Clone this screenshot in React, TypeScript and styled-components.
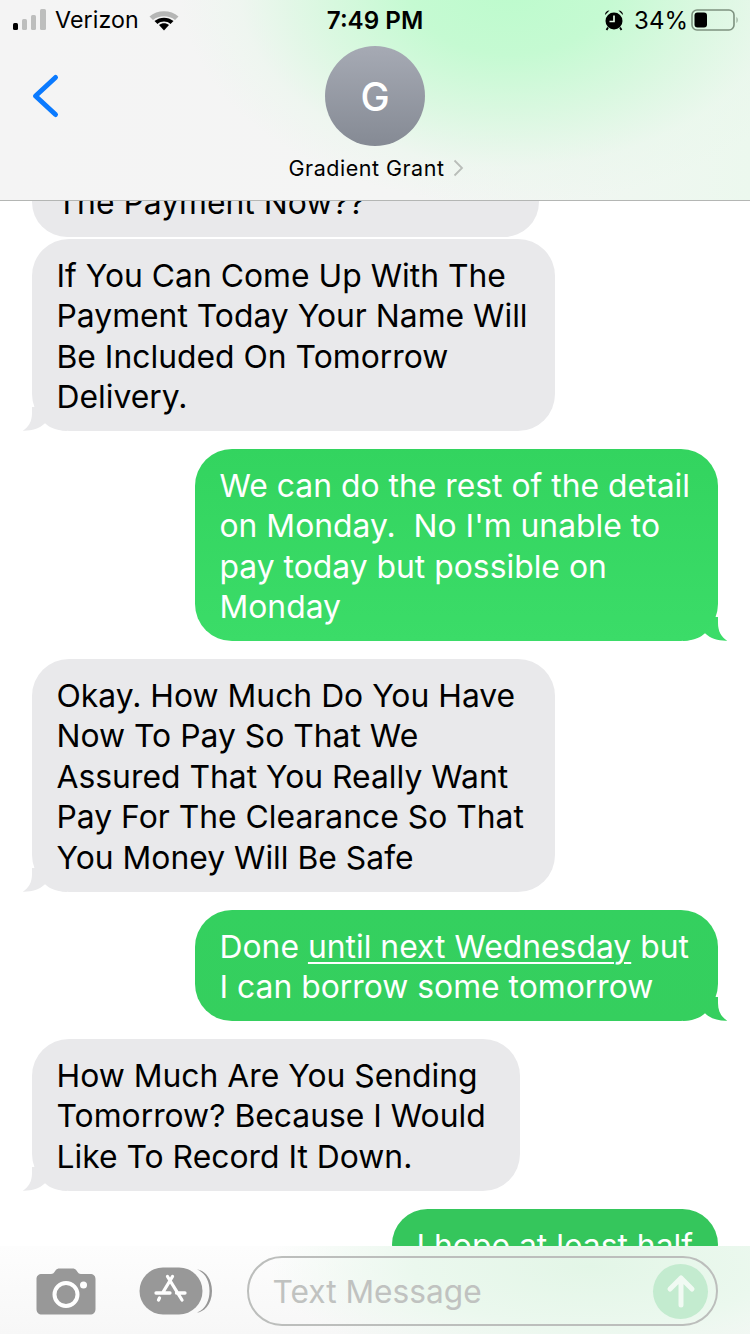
import React from 'react';
import styled, { createGlobalStyle } from 'styled-components';

const GlobalStyle = createGlobalStyle`
  html, body {
    margin: 0;
    padding: 0;
    background: #fff;
  }
`;

const Screen = styled.div`
  position: relative;
  display: flex;
  flex-direction: column;
  width: 750px;
  height: 1334px;
  overflow: hidden;
  background: #fff;
  font-family: Inter, "Liberation Sans", sans-serif;
  color: #000;
`;

const Header = styled.header`
  position: relative;
  z-index: 2;
  flex: 0 0 auto;
  height: 200px;
  border-bottom: 1px solid #b4b6b4;
  background:
    radial-gradient(ellipse 330px 215px at 510px -10px, #bdfbcd 0%, #c5fad2 30%, rgba(216, 248, 223, 0.9) 58%, rgba(232, 247, 235, 0.45) 82%, rgba(240, 246, 241, 0) 100%),
    linear-gradient(90deg, #f4f4f4 0%, #f4f5f4 55%, #ecf8ee 100%);
`;

const StatusBar = styled.div`
  display: grid;
  grid-template-columns: 1fr auto 1fr;
  align-items: center;
  height: 40px;
  padding: 0 13px;
`;

const StatusLeft = styled.div`
  display: flex;
  align-items: center;
  gap: 8px;
`;

const StatusRight = styled.div`
  display: flex;
  align-items: center;
  justify-content: flex-end;
  margin-right: -1.5px;
  gap: 10px;
`;

const Carrier = styled.span`
  font-size: 23.2px;
  letter-spacing: 0.1px;
`;

const Clock = styled.span`
  font-size: 24.2px;
  font-weight: 600;
`;

const Percent = styled.span`
  font-size: 24px;
  margin-right: -7.5px;
`;

const Contact = styled.div`
  position: relative;
  display: flex;
  flex-direction: column;
  align-items: center;
  padding-top: 6px;
`;

const BackIcon = styled.svg`
  position: absolute;
  left: 30px;
  top: 31px;
`;

const Avatar = styled.div`
  display: flex;
  align-items: center;
  justify-content: center;
  width: 100px;
  height: 100px;
  border-radius: 50%;
  background: linear-gradient(180deg, #a6aab4 0%, #858a94 100%);
  color: #fff;
  font-size: 39px;
  font-weight: 500;
`;

const ContactName = styled.div`
  display: flex;
  align-items: center;
  gap: 9px;
  margin-top: 9px;
  padding-left: 3px;
  font-size: 21.5px;
  line-height: 26px;
  letter-spacing: 0.5px;
`;

const Thread = styled.main`
  flex: 1 1 auto;
  display: flex;
  flex-direction: column;
  overflow: hidden;
  isolation: isolate;
  padding: 0 32px;
`;

const Bubble = styled.div<{ $out?: boolean; $width: number; $gap: number; $colors?: [string, string] }>`
  position: relative;
  flex: 0 0 auto;
  box-sizing: border-box;
  width: ${p => p.$width}px;
  margin-top: ${p => p.$gap}px;
  align-self: ${p => (p.$out ? 'flex-end' : 'flex-start')};
  padding: 16.5px 24.5px 13.5px;
  border-radius: 37px;
  font-size: 31.85px;
  line-height: 40.5px;
  white-space: pre;
  color: ${p => (p.$out ? '#fff' : '#000')};
  background: ${p =>
    p.$out && p.$colors
      ? `linear-gradient(180deg, ${p.$colors[0]}, ${p.$colors[1]})`
      : '#e9e9eb'};
`;

const Tail = styled.svg<{ $out?: boolean }>`
  position: absolute;
  z-index: -1;
  bottom: 0;
  ${p => (p.$out ? 'right: -11px; transform: scaleX(-1);' : 'left: -11px;')}
`;

const Link = styled.span`
  text-decoration: underline;
  text-decoration-thickness: 2px;
  text-underline-offset: 4px;
`;

const Composer = styled.footer`
  position: absolute;
  left: 0;
  right: 0;
  bottom: 0;
  z-index: 2;
  display: flex;
  align-items: center;
  height: 88px;
  box-sizing: border-box;
  padding: 2px 32px 0 36px;
  background:
    radial-gradient(ellipse 320px 110px at 590px 20px, #e3f6e7 0%, #ebf8ee 55%, rgba(248, 252, 249, 0) 100%),
    linear-gradient(180deg, #fdfdfd 0%, #f7f7f7 100%);
`;

const CameraIcon = styled.svg`
  flex: 0 0 auto;
`;

const AppsIcon = styled.svg`
  flex: 0 0 auto;
  margin-left: 43px;
`;

const InputField = styled.div`
  flex: 1 1 auto;
  display: flex;
  align-items: center;
  justify-content: space-between;
  box-sizing: border-box;
  height: 70px;
  margin-left: 34px;
  padding: 0 8px 0 23.5px;
  border: 2px solid #bcbebc;
  border-radius: 35px;
`;

const Placeholder = styled.span`
  font-size: 31.7px;
  color: #c0c2c0;
`;

const SendButton = styled.div`
  display: flex;
  align-items: center;
  justify-content: center;
  width: 55px;
  height: 55px;
  border-radius: 50%;
  background: #c3ebcf;
`;

const BubbleTail = ({ out, color }: { out?: boolean; color: string }) => (
  <Tail $out={out} width="46" height="24" viewBox="0 0 46 24">
    <path d="M11 0 V6 C11 14 8 20 1.700 23.700 C10 24 18 22 24 16.300 C28 20 34 23.500 46 24 V0 Z" fill={color} />
  </Tail>
);

const App = () => (
  <Screen>
    <GlobalStyle />
    <Header>
      <StatusBar>
        <StatusLeft>
          <svg width="34" height="22" viewBox="0 0 34 22">
            <rect x="0" y="14" width="5" height="7" rx="1.500" fill="#000" />
            <rect x="9" y="10" width="5" height="11" rx="1.500" fill="#bdbebd" />
            <rect x="18" y="6" width="5" height="15" rx="1.500" fill="#bdbebd" />
            <rect x="27" y="0" width="6" height="21" rx="1.500" fill="#bdbebd" />
          </svg>
          <Carrier>Verizon</Carrier>
          <svg width="30" height="22" viewBox="0 0 30 22" style={{ marginLeft: 2 }}>
            <path d="M0.500 7.500 C8 0.500 22 0.500 29.500 7.500 L26 11 C20 6 10 6 4 11 Z" fill="#b5b6b5" />
            <path d="M5.500 12 C11 7.500 19 7.500 24.500 12 L21.500 15 C17.500 11.800 12.500 11.800 8.500 15 Z" fill="#000" />
            <path d="M10 16 C13 13.800 17 13.800 20 16 L15 21.500 Z" fill="#000" />
          </svg>
        </StatusLeft>
        <Clock>7:49 PM</Clock>
        <StatusRight>
          <svg width="20" height="22" viewBox="0 0 20 22">
            <circle cx="10" cy="12" r="8.500" fill="#000" />
            <path d="M10 6.500 V12.500 H5.500" stroke="#e3f8e6" strokeWidth="1.700" fill="none" />
            <path d="M1 6 C1 3 3 1.500 5.500 1.500 Z M19 6 C19 3 17 1.500 14.500 1.500 Z" fill="#000" />
            <path d="M4 18.500 L2.500 21 M16 18.500 L17.500 21" stroke="#000" strokeWidth="1.800" />
          </svg>
          <Percent>34%</Percent>
          <svg width="48" height="24" viewBox="0 0 48 24">
            <rect x="1" y="2" width="42" height="20" rx="5" fill="none" stroke="#7d917f" strokeWidth="1.600" />
            <rect x="3.500" y="4.500" width="12.500" height="15" rx="3" fill="#000" />
            <path d="M45.500 9 C47 10 47 14 45.500 15 Z" fill="#8fa592" />
          </svg>
        </StatusRight>
      </StatusBar>
      <Contact>
        <BackIcon width="32" height="50" viewBox="0 0 32 50">
          <path d="M25.500 6.500 L5.500 25 L25.500 43.500" fill="none" stroke="#0a7aff" strokeWidth="5" strokeLinecap="round" strokeLinejoin="round" />
        </BackIcon>
        <Avatar>G</Avatar>
        <ContactName>
          Gradient Grant
          <svg width="11" height="18" viewBox="0 0 11 18">
            <path d="M1.500 1.500 L9 9 L1.500 16.500" fill="none" stroke="#b9bdb9" strokeWidth="1.800" />
          </svg>
        </ContactName>
      </Contact>
    </Header>
    <Thread>
      <Bubble $width={507} $gap={-34.5}>
        The Payment Now??
      </Bubble>
      <Bubble $width={523} $gap={2}>
        If You Can Come Up With The<br />
        Payment Today Your Name Will<br />
        Be Included On Tomorrow<br />
        Delivery.
        <BubbleTail color="#e9e9eb" />
      </Bubble>
      <Bubble $out $width={523} $gap={18} $colors={['#33d45f', '#3bdc68']}>
        We can do the rest of the detail<br />
        on Monday.  No I'm unable to<br />
        pay today but possible on<br />
        Monday
        <BubbleTail out color="#3bdc68" />
      </Bubble>
      <Bubble $width={523} $gap={18}>
        Okay. How Much Do You Have<br />
        Now To Pay So That We<br />
        Assured That You Really Want<br />
        Pay For The Clearance So That<br />
        You Money Will Be Safe
        <BubbleTail color="#e9e9eb" />
      </Bubble>
      <Bubble $out $width={523} $gap={18.5} $colors={['#34d05f', '#35cf5e']}>
        Done <Link>until next Wednesday</Link> but<br />
        I can borrow some tomorrow
        <BubbleTail out color="#35cf5e" />
      </Bubble>
      <Bubble $width={488} $gap={18}>
        How Much Are You Sending<br />
        Tomorrow? Because I Would<br />
        Like To Record It Down.
        <BubbleTail color="#e9e9eb" />
      </Bubble>
      <Bubble $out $width={326} $gap={18.5} $colors={['#35c65c', '#35c65c']}>
        I hope at least half
      </Bubble>
    </Thread>
    <Composer>
      <CameraIcon width="60" height="47" viewBox="0 0 60 47">
        <path d="M6 6 H15 C17 6 18 5 19.500 2.500 C20.500 1 22 0.500 23.500 0.500 H36.500 C38 0.500 39.500 1 40.500 2.500 C42 5 43 6 45 6 H54 C57.500 6 59.500 8 59.500 11 V41 C59.500 44.500 57.500 46.500 54 46.500 H6 C2.500 46.500 0.500 44.500 0.500 41 V11 C0.500 8 2.500 6 6 6 Z" fill="#989898" />
        <circle cx="30" cy="26.500" r="11.500" fill="none" stroke="#fff" strokeWidth="4" />
        <circle cx="47.500" cy="17" r="3.500" fill="#fff" />
      </CameraIcon>
      <AppsIcon width="74" height="48" viewBox="0 0 74 48">
        <path d="M58 2.500 C67 6 70.500 15 70.500 24 C70.500 33 67 42 58 45.500 C64 45.500 73 38 73 24 C73 10 64 2.500 58 2.500 Z" fill="#989898" />
        <rect x="0.500" y="0.500" width="63" height="47" rx="23.500" fill="#989898" />
        <path d="M33.500 9.500 L23.500 26 M20.500 31 L19.500 33 M28.500 9.500 L43 33 M17 26 H31 M37.500 26 H46" stroke="#fff" strokeWidth="3.300" strokeLinecap="round" fill="none" />
      </AppsIcon>
      <InputField>
        <Placeholder>Text Message</Placeholder>
        <SendButton>
          <svg width="30" height="34" viewBox="0 0 30 34">
            <path d="M15 31 V4 M4 15 L15 4 L26 15" fill="none" stroke="#f1faf3" strokeWidth="5" strokeLinecap="round" strokeLinejoin="round" />
          </svg>
        </SendButton>
      </InputField>
    </Composer>
  </Screen>
);

export default App;
